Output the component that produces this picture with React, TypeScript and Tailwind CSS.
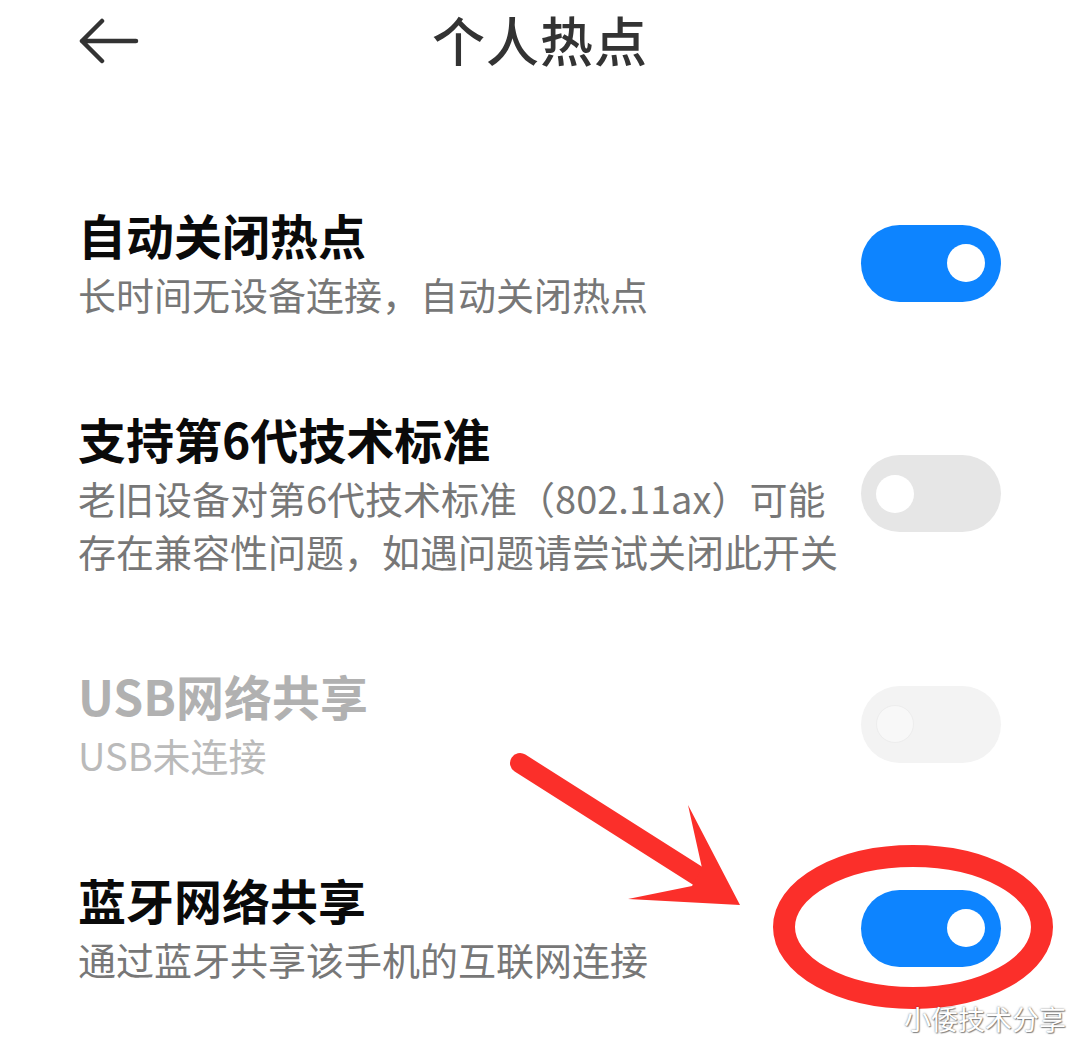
import React from "react";

type Row = {
  title: string;
  sub: React.ReactNode;
  state: "on" | "off" | "disabled";
};

const rows: Row[] = [
  { title: "自动关闭热点", sub: "长时间无设备连接，自动关闭热点", state: "on" },
  {
    title: "支持第6代技术标准",
    sub: (
      <>
        老旧设备对第6代技术标准（802.11ax）可能
        <br />
        存在兼容性问题，如遇问题请尝试关闭此开关
      </>
    ),
    state: "off",
  },
  { title: "USB网络共享", sub: "USB未连接", state: "disabled" },
  { title: "蓝牙网络共享", sub: "通过蓝牙共享该手机的互联网连接", state: "on" },
];

function Toggle({ state }: { state: Row["state"] }) {
  if (state === "on") {
    return (
      <div className="flex h-[77px] w-[140px] shrink-0 items-center justify-end rounded-full bg-[#0d84ff] pr-[16px]">
        <div className="h-[38px] w-[38px] rounded-full bg-white" />
      </div>
    );
  }
  if (state === "off") {
    return (
      <div className="flex h-[77px] w-[140px] shrink-0 items-center rounded-full bg-[#e6e6e6] pl-[15px]">
        <div className="h-[38px] w-[38px] rounded-full bg-white" />
      </div>
    );
  }
  return (
    <div className="flex h-[77px] w-[140px] shrink-0 items-center rounded-full bg-[#f3f3f3] pl-[15px]">
      <div className="h-[38px] w-[38px] rounded-full border border-[#ededed] bg-[#f8f8f8]" />
    </div>
  );
}

export default function App() {
  return (
    <div
      className="relative h-[1048px] w-[1080px] overflow-hidden bg-white"
      style={{ fontFamily: '"Noto Sans CJK SC", "Noto Sans", sans-serif' }}
    >
      <header className="grid h-[78px] grid-cols-[1fr_auto_1fr] items-center px-[78px]">
        <svg width="62" height="46" viewBox="0 0 62 46" className="mt-[4px]">
          <path
            d="M4 23 H58 M24 3 L4 23 L24 43"
            fill="none"
            stroke="#333"
            strokeWidth="4.5"
            strokeLinecap="round"
            strokeLinejoin="round"
          />
        </svg>
        <h1 className="text-[53px] font-medium leading-none tracking-[1px] text-[#333]">个人热点</h1>
        <div />
      </header>

      <main className="flex flex-col gap-[88px] pl-[78px] pr-[79px] pt-[126px]">
        {rows.map((r) => {
          const disabled = r.state === "disabled";
          return (
            <div key={r.title} className="flex items-center justify-between">
              <div className="whitespace-nowrap">
                <div
                  className={
                    disabled
                      ? "text-[48px] font-bold leading-[60px] text-[#b1b1b1]"
                      : "text-[48px] font-bold leading-[60px] text-[#0a0a0a]"
                  }
                >
                  {r.title}
                </div>
                <div
                  className={
                    disabled
                      ? "mt-[3px] text-[38px] leading-[53px] text-[#bababa]"
                      : "mt-[3px] text-[38px] leading-[53px] text-[#777]"
                  }
                >
                  {r.sub}
                </div>
              </div>
              <div className="pt-[2px]">
                <Toggle state={r.state} />
              </div>
            </div>
          );
        })}
      </main>

      {/* red annotation drawn over the screenshot */}
      <svg
        className="pointer-events-none absolute left-0 top-0"
        width="1080"
        height="1048"
        viewBox="0 0 1080 1048"
      >
        <line x1="520" y1="763" x2="698" y2="876" stroke="#fb2f2a" strokeWidth="20" strokeLinecap="round" />
        <polygon points="688,805 740,905 628,899 692,886 702,868" fill="#fb2f2a" />
        <ellipse cx="913" cy="927" rx="129" ry="71" fill="none" stroke="#fb2f2a" strokeWidth="22" />
      </svg>

      <div className="absolute bottom-[16px] right-[14px] text-[27px] leading-none text-white [text-shadow:0_0_2px_rgba(0,0,0,0.55),1px_1px_1px_rgba(0,0,0,0.4)]">
        小倭技术分享
      </div>
    </div>
  );
}
